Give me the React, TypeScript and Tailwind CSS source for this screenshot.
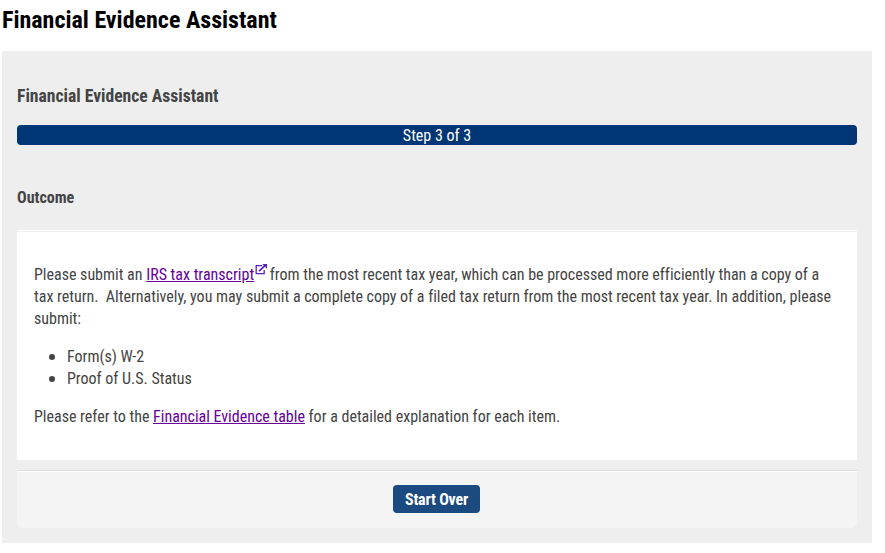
const ExternalIcon = () => (
  <svg
    className="inline-block w-3 h-3 ml-px -mr-px align-[4px]"
    viewBox="0 0 12 12"
    fill="none"
    stroke="#5a1fc0"
  >
    <path d="M7 1.7H1.2v8h8V6" strokeWidth="1.3" />
    <path d="M4 7.2 10 1.7" strokeWidth="1.7" />
    <path d="M7.3 0H12v4.7z" fill="#5a1fc0" stroke="none" />
  </svg>
);

const outcomeItems = ["Form(s) W-2", "Proof of U.S. Status"];

const App = () => {
  return (
    <div className="w-[885px] h-[553px] pl-[2px] bg-white text-[#444] text-base leading-[22px] font-['Roboto_Condensed','Roboto',sans-serif] [font-stretch:75%]">
      <h1 className="h-[51px] pt-1 text-2xl leading-8 font-bold text-black">
        Financial Evidence Assistant
      </h1>
      <main className="w-[870px] h-[492px] px-[15px] pt-[33px] bg-[#eee]">
        <h2 className="h-[41px] text-[17.6px] leading-6 font-bold">
          Financial Evidence Assistant
        </h2>
        <div className="h-5 rounded bg-[#003675] text-white text-center leading-[22px]">
          Step 3 of 3
        </div>
        <h3 className="h-[85px] pt-[42px] font-bold">Outcome</h3>
        <section className="h-[230px] px-[17px] pt-[33px] bg-white border-t border-white shadow-[inset_0_1px_0_#eee] tracking-[-0.01px]">
          <p>
            Please submit an{" "}
            <a href="#" className="text-[#609] underline">
              IRS tax transcript
            </a>
            <ExternalIcon /> from the most recent tax year, which can be
            processed more efficiently than a copy of a tax return.&nbsp;
            Alternatively, you may submit a complete copy of a filed tax return
            from the most recent tax year. In addition, please submit:
          </p>
          <ul className="my-4">
            {outcomeItems.map((item) => (
              <li key={item} className="flex items-center">
                <span className="w-1.5 h-1.5 ml-[15px] mr-3 rounded-full bg-[#444]" />
                {item}
              </li>
            ))}
          </ul>
          <p>
            Please refer to the{" "}
            <a href="#" className="text-[#609] underline">
              Financial Evidence table
            </a>{" "}
            for a detailed explanation for each item.
          </p>
        </section>
        <footer className="h-[58px] mt-[10px] pt-[14px] rounded-b-md bg-[#f4f4f4] border-t border-[#ddd] shadow-[inset_0_1px_0_#fff]">
          <button className="block w-[87px] h-7 ml-[376px] pt-0.5 rounded bg-[#1a4a80] text-white font-bold tracking-[-0.2px]">
            Start Over
          </button>
        </footer>
      </main>
    </div>
  );
};

export default App;
